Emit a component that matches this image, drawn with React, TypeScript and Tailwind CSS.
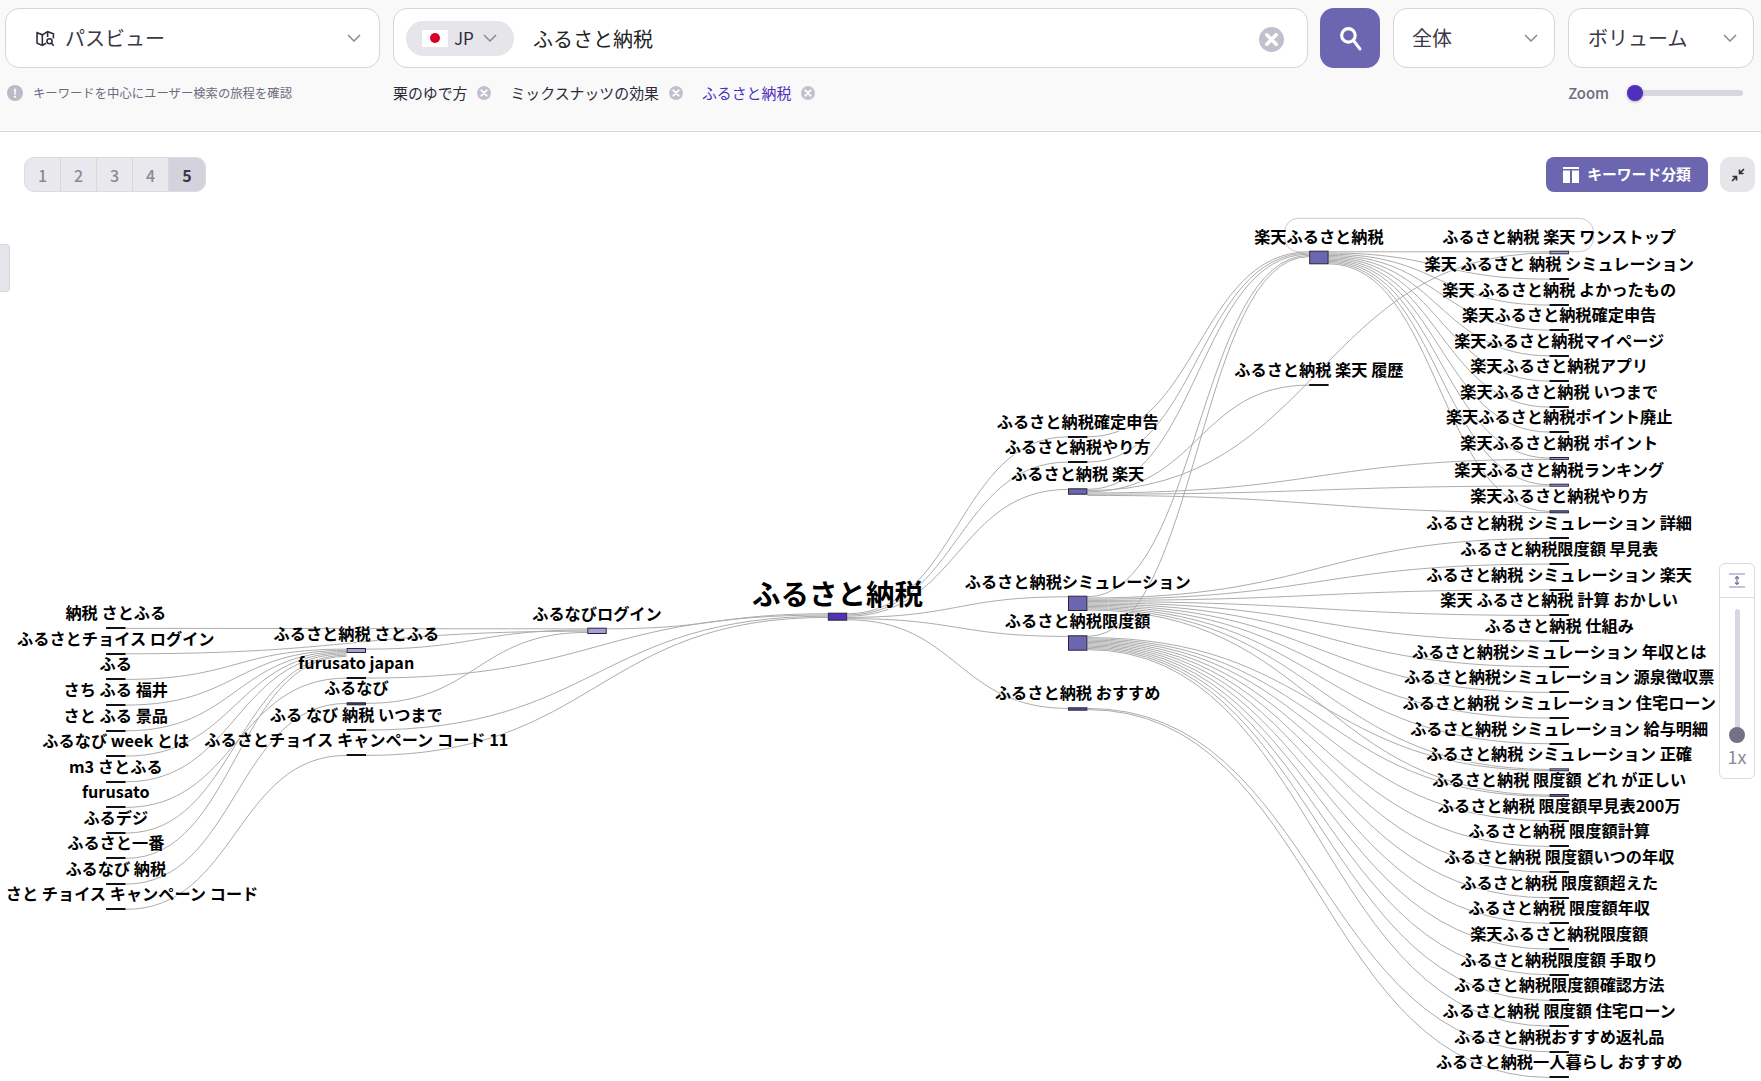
import { useMemo } from "react"

const COL = [115.8, 356.3, 597, 837.5, 1077.7, 1318.9, 1559.2]
const BAR = "#111118"
const LILAC = "#a5a1d8"
const MED = "#6c66b0"
const DARK = "#3f3b6e"
const MID = "#55509a"

type ChartNode = { id: string; label: string; col: number; y: number; h: number; fill: string; big?: boolean; dx?: number }

const n = (id: string, label: string, col: number, y: number, h = 2, fill = BAR): ChartNode => ({ id, label, col, y, h, fill })

const LEFT_ROWS = [
    ["納税 さとふる", 627.3],
    ["ふるさとチョイス ログイン", 652.7],
    ["ふる", 678.3],
    ["さち ふる 福井", 704],
    ["さと ふる 景品", 729.7],
    ["ふるなび week とは", 755],
    ["m3 さとふる", 780.7],
    ["furusato", 806.3],
    ["ふるデジ", 832],
    ["ふるさと一番", 857.3],
    ["ふるなび 納税", 883],
    ["さと チョイス キャンペーン コード", 908.3],
] as const

const TOP_ROWS: [string, number][] = [
    ["ふるさと納税 楽天 ワンストップ", 250.7],
    ["楽天 ふるさと 納税 シミュレーション", 278],
    ["楽天 ふるさと納税 よかったもの", 304],
    ["楽天ふるさと納税確定申告", 329],
    ["楽天ふるさと納税マイページ", 354.7],
    ["楽天ふるさと納税アプリ", 380],
    ["楽天ふるさと納税 いつまで", 406],
    ["楽天ふるさと納税ポイント廃止", 431],
    ["楽天ふるさと納税 ポイント", 457],
    ["楽天ふるさと納税ランキング", 483.7],
    ["楽天ふるさと納税やり方", 510.3],
]

const BOTTOM_ROWS = [
    "ふるさと納税 シミュレーション 詳細",
    "ふるさと納税限度額 早見表",
    "ふるさと納税 シミュレーション 楽天",
    "楽天 ふるさと納税 計算 おかしい",
    "ふるさと納税 仕組み",
    "ふるさと納税シミュレーション 年収とは",
    "ふるさと納税シミュレーション 源泉徴収票",
    "ふるさと納税 シミュレーション 住宅ローン",
    "ふるさと納税 シミュレーション 給与明細",
    "ふるさと納税 シミュレーション 正確",
    "ふるさと納税 限度額 どれ が正しい",
    "ふるさと納税 限度額早見表200万",
    "ふるさと納税 限度額計算",
    "ふるさと納税 限度額いつの年収",
    "ふるさと納税 限度額超えた",
    "ふるさと納税 限度額年収",
    "楽天ふるさと納税限度額",
    "ふるさと納税限度額 手取り",
    "ふるさと納税限度額確認方法",
    "ふるさと納税 限度額 住宅ローン",
    "ふるさと納税おすすめ返礼品",
    "ふるさと納税一人暮らし おすすめ",
]

const RIGHT_ROWS: [string, number][] = [...TOP_ROWS, ...BOTTOM_ROWS.map((label, k): [string, number] => [label, 537.3 + 25.67 * k])]

const RIGHT_FILL: Record<number, [number, string]> = {
    0: [3.6, LILAC],
    8: [2.9, LILAC],
    9: [3, LILAC],
    10: [3, MED],
    20: [2.9, LILAC],
    21: [2.9, MED],
}

const NODES: ChartNode[] = [
    ...LEFT_ROWS.map(([label, y], i) => ({ ...n(`l${i}`, label, 0, y), dx: i === 11 ? 16.2 : 0 })),
    n("satofuru", "ふるさと納税 さとふる", 1, 648, 5, LILAC),
    n("japan", "furusato japan", 1, 677),
    n("furunavi", "ふるなび", 1, 702.3, 3, DARK),
    n("itsumade", "ふる なび 納税 いつまで", 1, 729),
    n("campaign", "ふるさとチョイス キャンペーン コード 11", 1, 754.3),
    n("login", "ふるなびログイン", 2, 627.7, 6.3, LILAC),
    { ...n("root", "ふるさと納税", 3, 612.7, 8, "#5133b8"), big: true },
    n("kakutei", "ふるさと納税確定申告", 4, 435.7),
    n("yarikata", "ふるさと納税やり方", 4, 461),
    n("rakuten", "ふるさと納税 楽天", 4, 488.3, 6.4, MED),
    n("sim", "ふるさと納税シミュレーション", 4, 595.7, 15.3, MED),
    n("gendo", "ふるさと納税限度額", 4, 635.3, 15.4, MED),
    n("osusume", "ふるさと納税 おすすめ", 4, 707.3, 3.4, MID),
    n("rfuru", "楽天ふるさと納税", 5, 250.7, 13.6, MED),
    n("rireki", "ふるさと納税 楽天 履歴", 5, 384),
    ...RIGHT_ROWS.map(([label, y], i) => n(`r${i}`, label, 6, y, RIGHT_FILL[i]?.[0] ?? 2, RIGHT_FILL[i]?.[1] ?? BAR)),
]

const range = (a: number, b: number) => Array.from({ length: b - a + 1 }, (_, i) => a + i)

const LINKS: [string, string][] = [
    ["l0", "login"],
    ["l1", "login"],
    ["l2", "satofuru"],
    ["l3", "satofuru"],
    ["l4", "satofuru"],
    ["l5", "satofuru"],
    ["l6", "satofuru"],
    ["l7", "japan"],
    ["l8", "satofuru"],
    ["l9", "satofuru"],
    ["l10", "furunavi"],
    ["l11", "campaign"],
    ["satofuru", "login"],
    ["furunavi", "login"],
    ["login", "root"],
    ["japan", "root"],
    ["itsumade", "root"],
    ["campaign", "root"],
    ["root", "kakutei"],
    ["root", "yarikata"],
    ["root", "rakuten"],
    ["root", "sim"],
    ["root", "gendo"],
    ["root", "osusume"],
    ["kakutei", "rfuru"],
    ["yarikata", "rfuru"],
    ["rakuten", "rfuru"],
    ["sim", "rfuru"],
    ["gendo", "rfuru"],
    ["rakuten", "rireki"],
    ["rakuten", "r0"],
    ["rakuten", "r8"],
    ["rakuten", "r9"],
    ["rakuten", "r10"],
    ...range(0, 10).map((i): [string, string] => ["rfuru", `r${i}`]),
    ...range(11, 21).map((i): [string, string] => ["sim", `r${i}`]),
    ...range(20, 30).map((i): [string, string] => ["gendo", `r${i}`]),
    ["osusume", "r31"],
    ["osusume", "r32"],
]

const LINK_W = 1.2

// sankey style: each link takes its slot on the source and target bars
function linkPaths() {
    const byId = Object.fromEntries(NODES.map((node) => [node.id, node]))
    const outUsed: Record<string, number> = {}
    const inUsed: Record<string, number> = {}
    const sorted = [...LINKS].sort((a, b) => byId[a[1]].y - byId[b[1]].y)
    const ys = new Map<[string, string], number>()
    sorted.forEach((link) => {
        const used = outUsed[link[0]] ?? 0
        ys.set(link, byId[link[0]].y + 0.5 + LINK_W * (used + 0.5))
        outUsed[link[0]] = used + 1
    })
    const bySource = [...LINKS].sort((a, b) => byId[a[0]].y - byId[b[0]].y)
    return bySource.map((link) => {
        const used = inUsed[link[1]] ?? 0
        inUsed[link[1]] = used + 1
        const s = byId[link[0]]
        const t = byId[link[1]]
        const x0 = COL[s.col] + 9.7
        const x1 = COL[t.col] - 9.7
        const y0 = ys.get(link) as number
        const y1 = t.y + 0.5 + LINK_W * (used + 0.5)
        const mx = (x0 + x1) / 2
        return `M${x0} ${y0}C${mx} ${y0} ${mx} ${y1} ${x1} ${y1}`
    })
}

function Chart() {
    const paths = useMemo(linkPaths, [])
    return (
        <svg className="absolute left-0 top-0" width={1761} height={1081} viewBox="0 0 1761 1081">
            <g fill="none" stroke="#acacac" strokeWidth={1}>
                {paths.map((d, i) => (
                    <path key={i} d={d} />
                ))}
            </g>
            <path
                d="M1309 251.7H1298A14 14 0 0 1 1284.5 238V232A14 14 0 0 1 1298 218.3H1580A14 14 0 0 1 1593.6 232V238A14 14 0 0 1 1580 251.7H1569"
                fill="none"
                stroke="#d9c3c9"
                strokeWidth={1}
            />
            {NODES.map((node) => (
                <rect
                    key={node.id}
                    x={COL[node.col] - 9.2}
                    y={node.h === 2 ? Math.round(node.y) + 0.5 : node.y + 0.5}
                    width={18.4}
                    height={node.h - 1}
                    fill={node.fill}
                    stroke={node.h === 2 ? BAR : "#25253a"}
                    strokeWidth={1}
                />
            ))}
            {NODES.map((node) => (
                <text
                    key={node.id}
                    x={COL[node.col] + (node.dx ?? 0)}
                    y={node.big ? node.y - 20 : node.y - 15}
                    textAnchor="middle"
                    dominantBaseline="central"
                    className={`fill-black font-bold [text-shadow:0_1px_0_#fff] ${node.big ? "text-[28.5px]" : "text-[16.2px]"}`}
                >
                    {node.label}
                </text>
            ))}
        </svg>
    )
}

function Chevron() {
    return (
        <svg width="14" height="8" viewBox="0 0 14 8" fill="none" stroke="#8b889b" strokeWidth="1.5" className="shrink-0">
            <path d="M1 1l6 6 6-6" />
        </svg>
    )
}

function ClearIcon({ size }: { size: number }) {
    return (
        <svg width={size} height={size} viewBox="0 0 24 24" className="shrink-0">
            <circle cx="12" cy="12" r="12" fill="#c2c0cd" />
            <path d="M7.5 7.5l9 9M16.5 7.5l-9 9" stroke="#fff" strokeWidth="3.4" strokeLinecap="round" />
        </svg>
    )
}

function MapSearchIcon() {
    return (
        <svg width="19" height="17" viewBox="0 0 18 16" fill="none" stroke="#2f2d3a" strokeWidth="1.5" className="shrink-0">
            <path d="M9.5 12.5L6 14.5 1 12.5V2.5l5 2 5-3 5.5 2v4.5" />
            <path d="M6 4.5v10M11 1.5v5" />
            <circle cx="12.8" cy="10.6" r="2.4" />
            <path d="M14.6 12.4l2.2 2.4" />
        </svg>
    )
}

function SearchIcon() {
    return (
        <svg width="25" height="25" viewBox="0 0 24 24" fill="none" stroke="#fff" strokeWidth="3" strokeLinecap="round">
            <circle cx="10" cy="9" r="6.5" />
            <path d="M15 14l6 8" />
        </svg>
    )
}

function ShrinkIcon() {
    return (
        <svg width="16" height="16" viewBox="0 0 16 16" fill="none" stroke="#2f2d3a" strokeWidth="1.6">
            <path d="M14 2L10 6M9.5 2.5v4h4" />
            <path d="M2 14l4-4M6.5 13.5v-4h-4" />
        </svg>
    )
}

function KeywordIcon() {
    return (
        <svg width="16" height="16" viewBox="0 0 16 16" fill="#fff" className="shrink-0">
            <rect x="0" y="0" width="16" height="2" />
            <rect x="0" y="3.5" width="7" height="12.5" />
            <rect x="9" y="3.5" width="7" height="12.5" />
        </svg>
    )
}

function Tag({ label, active }: { label: string; active?: boolean }) {
    return (
        <div className="flex items-center gap-[10px]">
            <span className={`text-[14.9px] ${active ? "text-[#4f2dbd]" : "text-[#2c2a3a]"}`}>{label}</span>
            <ClearIcon size={14} />
        </div>
    )
}

const PAGES = [1, 2, 3, 4, 5]

export default function App() {
    return (
        <div className="relative h-[1081px] w-[1761px] overflow-hidden bg-white font-['Noto_Sans_CJK_JP','Noto_Sans',sans-serif]">
            <Chart />

            {/* Search header */}
            <header className="relative h-[132px] border-b border-[#d8d6dd] bg-[#f9f9f9] pl-[5px] pr-[7px] pt-2">
                <div className="flex h-[60px] items-stretch text-[20px] text-[#3a3848]">
                    <div className="flex w-[375px] items-center rounded-[14px] border border-[#d5d3de] bg-white pl-[30px] pr-[18px]">
                        <MapSearchIcon />
                        <span className="ml-[10px] flex-1">パスビュー</span>
                        <Chevron />
                    </div>
                    <div className="ml-[13px] flex w-[915px] items-center rounded-[14px] border border-[#d5d3de] bg-white pl-3 pr-[23px]">
                        <div className="flex h-[35px] w-[108px] items-center rounded-full bg-[#e6e5ea] pl-4">
                            <div className="flex h-[17px] w-[26px] items-center justify-center bg-white">
                                <div className="h-[10px] w-[10px] rounded-full bg-[#d80027]" />
                            </div>
                            <span className="ml-[6px] text-[17px] text-[#2c2a3a]">JP</span>
                            <span className="ml-[9px]">
                                <Chevron />
                            </span>
                        </div>
                        <span className="ml-[19px] mt-[2px] flex-1 text-[#222]">ふるさと納税</span>
                        <span className="mt-[2px]">
                            <ClearIcon size={25} />
                        </span>
                    </div>
                    <button className="ml-3 flex w-[60px] items-center justify-center rounded-[14px] bg-[#6c66b0]">
                        <SearchIcon />
                    </button>
                    <div className="ml-[13px] flex w-[162px] items-center justify-between rounded-[14px] border border-[#d5d3de] bg-white pl-[18px] pr-4">
                        <span>全体</span>
                        <Chevron />
                    </div>
                    <div className="ml-[13px] flex w-[186px] items-center justify-between rounded-[14px] border border-[#d5d3de] bg-white pl-[19px] pr-4">
                        <span>ボリューム</span>
                        <Chevron />
                    </div>
                </div>

                <div className="mt-[15px] flex h-5 items-center">
                    <div className="flex w-[388px] items-center pl-[2px]">
                        <div className="flex h-4 w-4 items-center justify-center rounded-full bg-[#bcb9c9] text-[12px] font-bold text-white">!</div>
                        <span className="ml-[10px] text-[12.35px] text-[#6d6a80]">キーワードを中心にユーザー検索の旅程を確認</span>
                    </div>
                    <div className="flex gap-[19px]">
                        <Tag label="栗のゆで方" />
                        <Tag label="ミックスナッツの効果" />
                        <Tag label="ふるさと納税" active />
                    </div>
                    <span className="ml-auto text-[14.8px] font-medium text-[#6d6a80]">Zoom</span>
                    <div className="relative ml-[18px] mr-[11px] h-[6px] w-[116px] rounded-full bg-[#d8d6e0]">
                        <div className="absolute left-0 top-[-5px] h-4 w-4 rounded-full bg-[#4f2dbd] shadow-[0_1px_3px_rgba(0,0,0,0.3)]" />
                    </div>
                </div>
            </header>

            {/* Chart toolbar */}
            <div className="relative flex items-start justify-between pl-6 pr-[6px] pt-[25px]">
                <div className="flex h-[35px] overflow-hidden rounded-[10px] border border-[#dcdae2] bg-[#e9e8ed]">
                    {PAGES.map((page) => (
                        <div
                            key={page}
                            className={`flex w-9 items-center justify-center text-[16px] ${
                                page === 5 ? "bg-[#d4d2dc] font-bold text-[#3a3848]" : "border-r border-[#d8d6e0] font-medium text-[#8b889b]"
                            }`}
                        >
                            {page}
                        </div>
                    ))}
                </div>
                <div className="flex gap-3">
                    <button className="flex h-[35px] w-[162px] items-center justify-center gap-2 rounded-lg bg-[#6c66b0] text-[14.8px] font-bold text-white">
                        <KeywordIcon />
                        キーワード分類
                    </button>
                    <button className="flex h-[35px] w-[35px] items-center justify-center rounded-[10px] bg-[#e6e5ea]">
                        <ShrinkIcon />
                    </button>
                </div>
            </div>

            {/* Collapsed side tab */}
            <div className="absolute left-0 top-[244px] h-12 w-[10px] rounded-r border border-l-0 border-[#d8d6e0] bg-[#e6e5ea]" />

            {/* Vertical zoom panel */}
            <div className="absolute left-[1719px] top-[563px] flex h-[216px] w-9 flex-col items-center rounded-md border border-[#dcdae2] bg-white">
                <div className="flex h-[34px] w-full items-center justify-center border-b border-[#dcdae2]">
                    <svg width="16" height="15" viewBox="0 0 16 15" fill="none" stroke="#8a86c0" strokeWidth="1.2">
                        <path d="M0 1h16M0 14h16" />
                        <path d="M8 3.5v8M6 5.5l2-2 2 2M6 9.5l2 2 2-2" stroke="#77748c" />
                    </svg>
                </div>
                <div className="relative mt-[11px] h-[130px] w-[5px] rounded-full bg-[#d8d6e0]">
                    <div className="absolute bottom-[-4px] left-[-5.5px] h-4 w-4 rounded-full bg-[#737088]" />
                </div>
                <span className="mt-2 text-[18px] leading-none text-[#8b889b]">1x</span>
            </div>
        </div>
    )
}
